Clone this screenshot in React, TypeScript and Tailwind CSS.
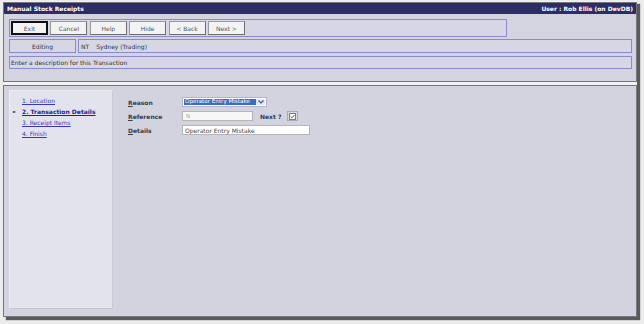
import React from 'react';

const font = { fontFamily: '"DejaVu Sans", Verdana, sans-serif' };

const buttons = ['Exit', 'Cancel', 'Help', 'Hide', '< Back', 'Next >'];
const steps = ['1. Location', '2. Transaction Details', '3. Receipt Items', '4. Finish'];

const Label: React.FC<{ text: string }> = ({ text }) => (
    <div className="h-[10px] flex items-center text-[6px] font-bold text-[#3a3a48]">
        <span className="underline">{text[0]}</span>
        {text.slice(1)}
    </div>
);

export default function App() {
    return (
        <div className="w-[644px] h-[324px] bg-[#ececec] overflow-hidden pt-[1px] pl-[3px]" style={font}>
            <div className="w-[634px] h-[316px] bg-[#f2f2f2] shadow-[3px_3px_1px_#5a5a5a] pt-[1px]">
                {/* Header panel */}
                <div className="h-[80px] border border-[#76767e] bg-[#d4d4e1] flex flex-col">
                    <div className="h-[11px] bg-[#2d2d66] flex items-center justify-between px-[3px] text-white text-[6px] font-bold whitespace-nowrap">
                        <span>Manual Stock Receipts</span>
                        <span>User : Rob Ellis (on DevDB)</span>
                    </div>
                    <div className="pl-[5px] pr-[4px] pt-[5px] flex flex-col">
                        <div className="w-[498px] h-[18px] border border-[#8b8bcc] bg-[#d6d6e4] p-[1px] flex gap-[2.4px]">
                            {buttons.map((b, i) => (
                                <div
                                    key={b}
                                    className={
                                        i === 0
                                            ? 'w-[37px] h-[14px] border-2 border-[#111] bg-[#f3f3f3] flex items-center justify-center text-[6px] text-[#555]'
                                            : 'w-[37px] h-[14px] border border-[#9a9a9a] border-b-[#6d6d6d] border-r-[#6d6d6d] bg-[#f3f3f3] flex items-center justify-center text-[6px] text-[#555]'
                                    }
                                >
                                    {b}
                                </div>
                            ))}
                        </div>
                        <div className="mt-[2px] h-[14px] flex gap-[2px] text-[6px] text-[#333]">
                            <div className="w-[67px] border border-[#8b8bcc] bg-[#d6d6e4] flex items-center justify-center">Editing</div>
                            <div className="flex-1 border border-[#8b8bcc] bg-[#d6d6e4] flex items-center pl-[2px] gap-[7px]">
                                <span>NT</span>
                                <span>Sydney (Trading)</span>
                            </div>
                        </div>
                        <div className="mt-[3px] h-[13px] border border-[#8b8bcc] bg-[#d6d6e4] flex items-center pl-[1px] text-[6px] text-[#333]">
                            Enter a description for this Transaction
                        </div>
                    </div>
                </div>

                {/* Body panel */}
                <div className="mt-[3px] h-[232px] border border-[#76767e] bg-[#d3d3e0] flex pl-[5px] pt-[4px]">
                    <div className="w-[104px] h-[219px] bg-[#e3e3ed] border border-[#ececf2] border-r-[#c9c9d2] border-b-[#c9c9d2] pt-[4px] pl-[1px] flex flex-col">
                        {steps.map((s, i) => (
                            <div key={s} className="h-[11px] flex items-center text-[6px] whitespace-nowrap">
                                <span className="w-[11px] pl-[2px] text-[4px] text-[#222]">{i === 1 ? '►' : ''}</span>
                                <span
                                    className={
                                        i === 1
                                            ? 'underline font-bold text-[#24248e]'
                                            : 'underline text-[#3a3ab8]'
                                    }
                                >
                                    {s}
                                </span>
                            </div>
                        ))}
                    </div>

                    <div className="ml-[15px] pt-[7px] grid grid-cols-[54px_auto] gap-y-[4px] content-start">
                        <Label text="Reason" />
                        <div className="h-[10px] w-[85px] bg-white border border-[#b5b5c5] flex items-center p-[1px]">
                            <div className="flex-1 h-full bg-[#3c6cc4] text-white text-[5.6px] flex items-center pl-[1px] leading-none whitespace-nowrap overflow-hidden">
                                Operator Entry Mistake
                            </div>
                            <div className="w-[9px] h-full bg-[#dfe6f5] flex items-center justify-center">
                                <svg width="6" height="4" viewBox="0 0 6 4">
                                    <path d="M0.5 0.5 L3 3 L5.5 0.5" fill="none" stroke="#3a56a8" strokeWidth="1.2" />
                                </svg>
                            </div>
                        </div>

                        <Label text="Reference" />
                        <div className="h-[10px] flex items-center">
                            <div className="w-[71px] h-[10px] bg-[#f7f7f7] border border-[#b5b5b5] flex items-center pl-[3px] text-[5.5px] text-[#aaa]">
                                N
                            </div>
                            <span className="ml-[7px] text-[6px] font-bold text-[#3a3a48] whitespace-nowrap">Next ?</span>
                            <div className="ml-[6px] w-[11px] h-[10px] border border-[#a8a8b8] bg-[#d8d8e4] flex items-center justify-center">
                                <div className="w-[7px] h-[7px] border border-[#6a8a6a] bg-[#f4f8f0] flex items-center justify-center">
                                    <svg width="5" height="5" viewBox="0 0 5 5">
                                        <path d="M0.7 2.6 L2 3.9 L4.4 1" fill="none" stroke="#2e9a2e" strokeWidth="1" />
                                    </svg>
                                </div>
                            </div>
                        </div>

                        <Label text="Details" />
                        <div className="w-[128px] h-[10px] bg-white border border-[#b5b5b5] flex items-center pl-[2px] text-[6px] text-[#444] whitespace-nowrap">
                            Operator Entry Mistake
                        </div>
                    </div>
                </div>
            </div>
        </div>
    );
}
